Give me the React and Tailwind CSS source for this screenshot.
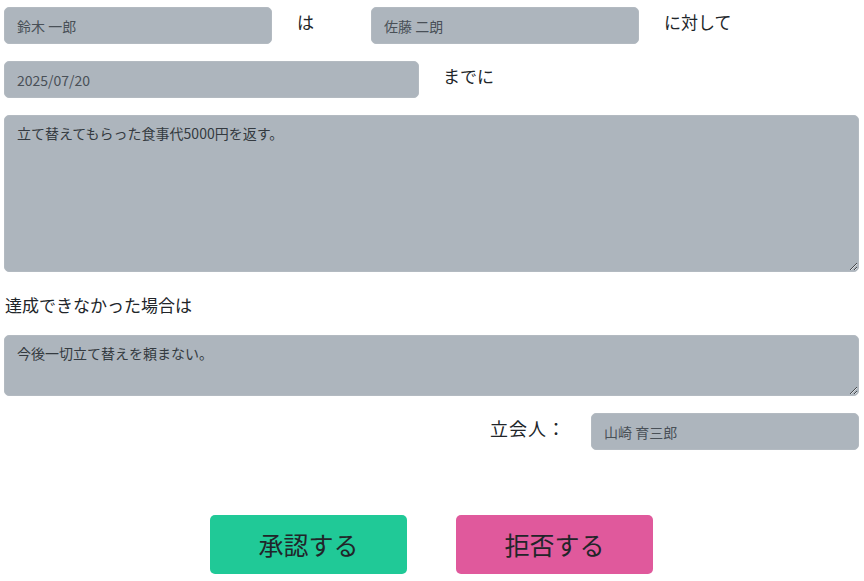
import React, { useState } from "react";

export default function App() {
  const [debtor, setDebtor] = useState("鈴木 一郎");
  const [creditor, setCreditor] = useState("佐藤 二朗");
  const [deadline, setDeadline] = useState("2025/07/20");
  const [promise, setPromise] = useState("立て替えてもらった食事代5000円を返す。");
  const [penalty, setPenalty] = useState("今後一切立て替えを頼まない。");
  const [witness, setWitness] = useState("山崎 育三郎");

  const inputCls =
    "h-[37px] rounded-[5px] border border-[#b3bac1] bg-[#adb5bd] px-3 text-sm text-[#495057] outline-none";

  return (
    <div
      className="w-[864px] bg-white pl-[4px] pr-[5px] pt-[7px] text-[#212529]"
      style={{ fontFamily: '"Noto Sans CJK JP", "Noto Sans", sans-serif' }}
    >
      {/* 誰が誰に */}
      <div className="flex items-start">
        <input className={`${inputCls} w-[268px]`} value={debtor} onChange={(e) => setDebtor(e.target.value)} />
        <span className="w-[99px] pl-[25px] pt-[2px] text-[17px] leading-[26px]">は</span>
        <input className={`${inputCls} w-[268px]`} value={creditor} onChange={(e) => setCreditor(e.target.value)} />
        <span className="pl-[25px] pt-[2px] text-[17px] leading-[26px]">に対して</span>
      </div>

      {/* 期限 */}
      <div className="mt-[17px] flex items-start">
        <input
          className={`${inputCls} w-[415px] text-[#343a40]`}
          value={deadline}
          onChange={(e) => setDeadline(e.target.value)}
        />
        <span className="pl-[24px] pt-[2px] text-[17px] leading-[26px]">までに</span>
      </div>

      <textarea
        className="mt-[17px] block h-[157px] w-full rounded-[5px] border border-[#b3bac1] bg-[#adb5bd] px-3 py-[7px] text-sm leading-[21px] text-[#343a40] outline-none"
        value={promise}
        onChange={(e) => setPromise(e.target.value)}
      />

      <div className="flex h-[63px] items-center pl-[1px] pt-[3px] text-[17px]">達成できなかった場合は</div>

      <textarea
        className="block h-[61px] w-full rounded-[5px] border border-[#b3bac1] bg-[#adb5bd] px-3 py-[7px] text-sm leading-[21px] text-[#343a40] outline-none"
        value={penalty}
        onChange={(e) => setPenalty(e.target.value)}
      />

      {/* 立会人 */}
      <div className="mt-[17px] flex items-start justify-end">
        <span className="pt-[1px] text-[18px] tracking-[1px] leading-[28px]">立会人：</span>
        <input
          className={`${inputCls} ml-[25px] w-[268px]`}
          value={witness}
          onChange={(e) => setWitness(e.target.value)}
        />
      </div>

      {/* ボタン */}
      <div className="mt-[65px] flex justify-center gap-[49px]">
        <button className="h-[59px] w-[197px] rounded-[5px] bg-[#20c997] text-[25px] text-[#212529]">承認する</button>
        <button className="h-[59px] w-[197px] rounded-[5px] bg-[#e0599c] text-[25px] text-[#212529]">拒否する</button>
      </div>
    </div>
  );
}
